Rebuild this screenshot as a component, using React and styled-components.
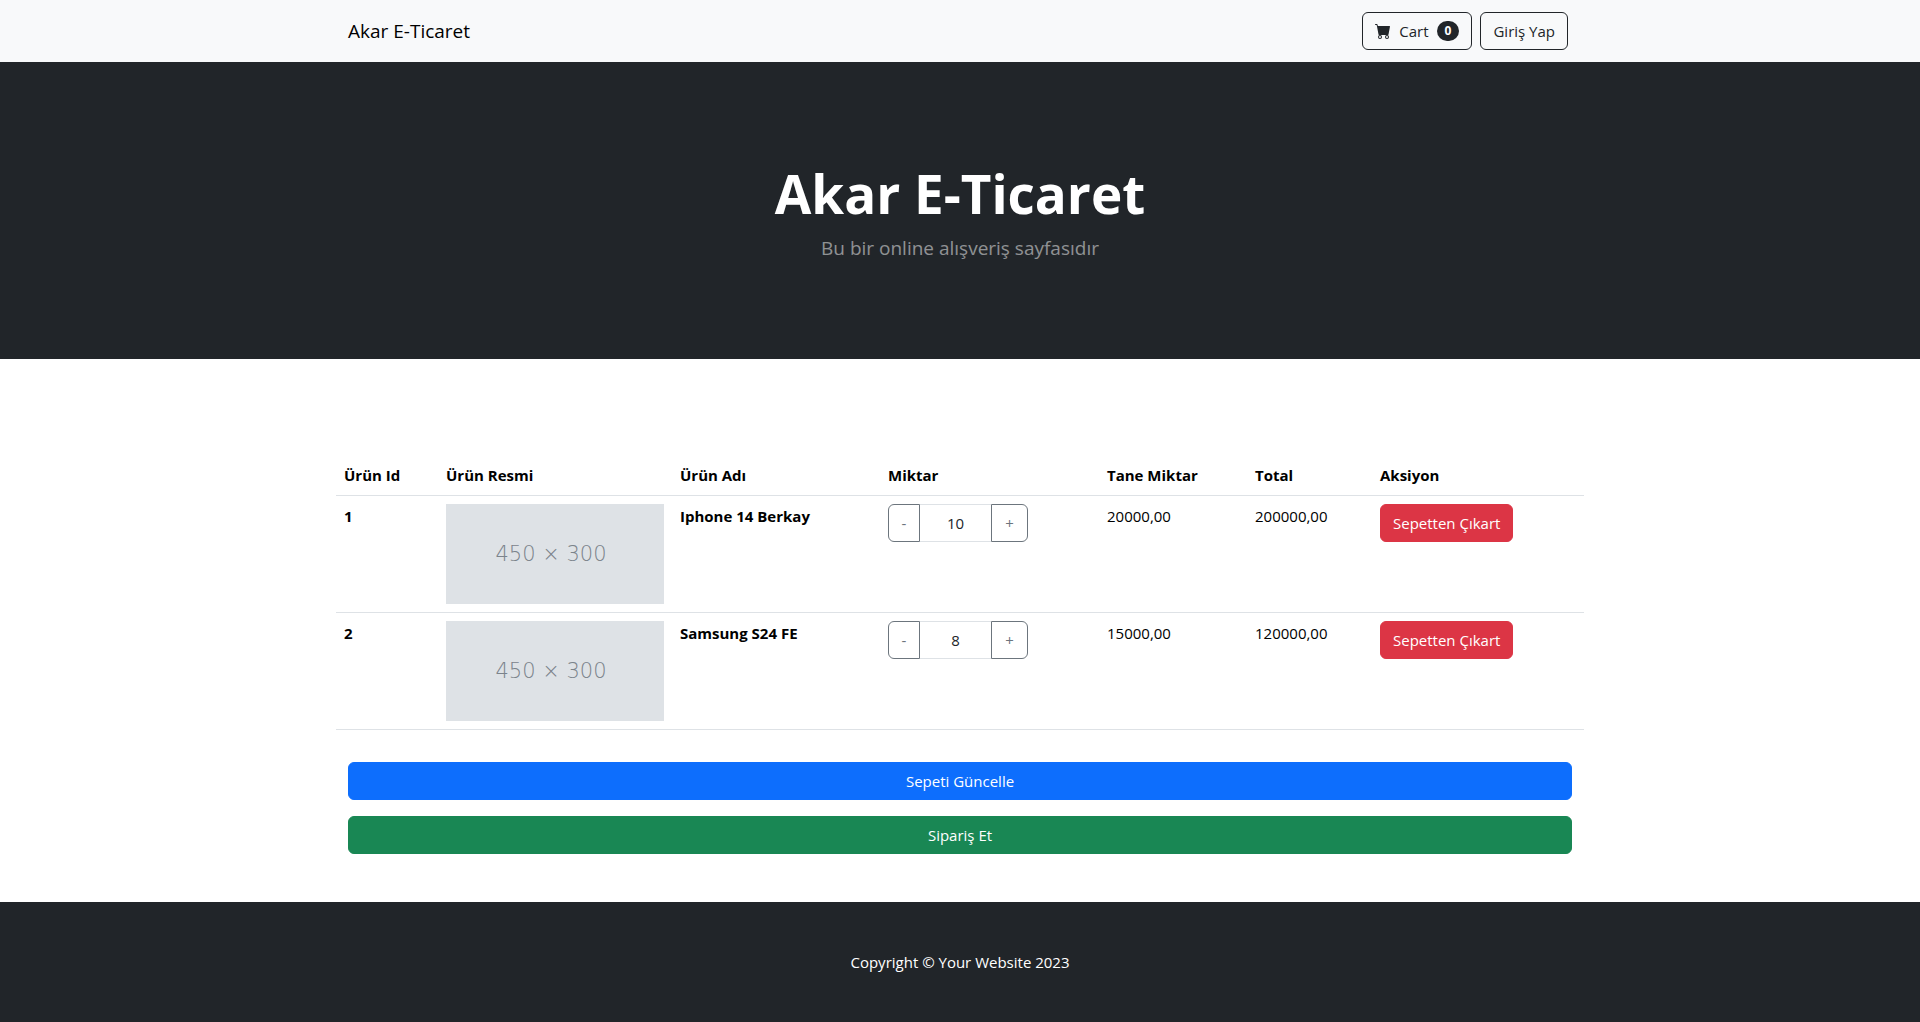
import React, { useState } from "react";
import styled, { createGlobalStyle } from "styled-components";
import { BsCartFill } from "react-icons/bs";

const GlobalStyle = createGlobalStyle`
  *, *::before, *::after { box-sizing: border-box; }
  body {
    margin: 0;
    background: #fff;
    color: #212529;
    font-family: "Segoe UI", "Open Sans", "Noto Sans", sans-serif;
    font-size: 15px;
    line-height: 24px;
  }
  button, input { font: inherit; }
`;

const Container = styled.div`
  max-width: 1320px;
  margin: 0 auto;
  padding: 0 48px;
`;

const Navbar = styled.nav`
  background: #f8f9fa;
  padding: 12px 0;
`;

const NavRow = styled(Container)`
  display: flex;
  align-items: center;
  justify-content: space-between;
  padding-right: 52px;
`;

const Brand = styled.a`
  color: #000;
  font-size: 19px;
  line-height: 30px;
  text-decoration: none;
`;

const NavActions = styled.div`
  display: flex;
  gap: 8px;
`;

const palettes = {
  dark: { bg: "transparent", border: "#212529", text: "#212529" },
  secondary: { bg: "transparent", border: "#6c757d", text: "#6c757d" },
  danger: { bg: "#dc3545", border: "#dc3545", text: "#fff" },
  primary: { bg: "#0d6efd", border: "#0d6efd", text: "#fff" },
  success: { bg: "#198754", border: "#198754", text: "#fff" },
};

const Button = styled.button`
  display: inline-flex;
  align-items: center;
  justify-content: center;
  gap: 8px;
  padding: 6px 12px;
  border: 1px solid ${(p) => palettes[p.$tone].border};
  border-radius: 6px;
  background: ${(p) => palettes[p.$tone].bg};
  color: ${(p) => palettes[p.$tone].text};
  cursor: pointer;
  white-space: nowrap;
`;

const Badge = styled.span`
  padding: 4px 8px;
  border-radius: 10px;
  background: #212529;
  color: #fff;
  font-size: 12px;
  font-weight: 700;
  line-height: 12px;
`;

const Hero = styled.header`
  padding: 96px 0;
  background: #212529;
  color: #fff;
  text-align: center;
`;

const HeroTitle = styled.h1`
  margin: 0 0 4px;
  font-size: 53px;
  font-weight: 700;
  line-height: 71px;
`;

const HeroText = styled.p`
  margin: 0;
  color: rgba(255, 255, 255, 0.5);
  font-size: 19px;
  line-height: 30px;
`;

const Main = styled.main`
  padding: 96px 0 48px;
`;

const CartBody = styled(Container)`
  display: flex;
  flex-direction: column;
  gap: 16px;
`;

const TableWrap = styled.div`
  margin: 0 -12px 16px;
`;

const Table = styled.table`
  width: 100%;
  table-layout: fixed;
  border-collapse: separate;
  border-spacing: 0;
  color: #000;
`;

const Col = styled.col`
  width: ${(p) => p.$width}px;
`;

const HeadCell = styled.th`
  padding: 8px;
  border-bottom: 1px solid #dee2e6;
  font-weight: 700;
  text-align: left;
  vertical-align: top;
`;

const Cell = styled.td`
  padding: 8px;
  border-bottom: 1px solid #dee2e6;
  font-weight: ${(p) => (p.$bold ? 700 : 400)};
  vertical-align: top;
`;

const Placeholder = styled.div`
  display: flex;
  align-items: center;
  justify-content: center;
  height: 100px;
  padding-right: 8px;
  background: #dee2e6;
  color: #7b838b;
  font-family: "DejaVu Sans", sans-serif;
  font-size: 21px;
  font-weight: 200;
`;

const Stepper = styled.div`
  display: flex;
  width: 140px;
`;

const StepButton = styled(Button)`
  border-radius: ${(p) => (p.$end ? "0 6px 6px 0" : "6px 0 0 6px")};
  width: ${(p) => (p.$end ? 37 : 32)}px;
`;

const Quantity = styled.input`
  flex: 1;
  min-width: 0;
  padding: 6px 12px;
  border: solid #dee2e6;
  border-width: 1px 0;
  background: #fff;
  color: #212529;
  text-align: center;
`;

const Footer = styled.footer`
  padding: 48px 0;
  background: #212529;
  color: #fff;
  text-align: center;
`;

const Copyright = styled.p`
  margin: 0;
`;

const columns = [
  { title: "Ürün Id", width: 102 },
  { title: "Ürün Resmi", width: 234 },
  { title: "Ürün Adı", width: 208 },
  { title: "Miktar", width: 219 },
  { title: "Tane Miktar", width: 148 },
  { title: "Total", width: 125 },
  { title: "Aksiyon", width: 212 },
];

const products = [
  { id: 1, name: "Iphone 14 Berkay", count: 10, price: "20000,00", total: "200000,00" },
  { id: 2, name: "Samsung S24 FE", count: 8, price: "15000,00", total: "120000,00" },
];

function QuantityStepper({ name, initial }) {
  const [count, setCount] = useState(initial);
  return (
    <Stepper>
      <StepButton type="button" $tone="secondary" aria-label={`${name} azalt`} onClick={() => setCount(Math.max(0, Number(count) - 1))}>
        -
      </StepButton>
      <Quantity type="text" aria-label={`${name} miktar`} value={count} onChange={(e) => setCount(e.target.value)} />
      <StepButton type="button" $tone="secondary" $end aria-label={`${name} artır`} onClick={() => setCount(Number(count) + 1)}>
        +
      </StepButton>
    </Stepper>
  );
}

export default function App() {
  return (
    <>
      <GlobalStyle />
      <Navbar>
        <NavRow>
          <Brand href="#">Akar E-Ticaret</Brand>
          <NavActions>
            <Button type="button" $tone="dark">
              <BsCartFill size={16} aria-hidden="true" />
              Cart
              <Badge>0</Badge>
            </Button>
            <Button type="button" $tone="dark">Giriş Yap</Button>
          </NavActions>
        </NavRow>
      </Navbar>

      <Hero>
        <HeroTitle>Akar E-Ticaret</HeroTitle>
        <HeroText>Bu bir online alışveriş sayfasıdır</HeroText>
      </Hero>

      <Main>
        <CartBody>
          <TableWrap>
            <Table>
              <colgroup>
                {columns.map((c) => <Col key={c.title} $width={c.width} />)}
              </colgroup>
              <thead>
                <tr>
                  {columns.map((c) => <HeadCell key={c.title} scope="col">{c.title}</HeadCell>)}
                </tr>
              </thead>
              <tbody>
                {products.map((p) => (
                  <tr key={p.id}>
                    <HeadCell scope="row">{p.id}</HeadCell>
                    <Cell><Placeholder>450 × 300</Placeholder></Cell>
                    <Cell $bold>{p.name}</Cell>
                    <Cell><QuantityStepper name={p.name} initial={p.count} /></Cell>
                    <Cell>{p.price}</Cell>
                    <Cell>{p.total}</Cell>
                    <Cell><Button type="button" $tone="danger">Sepetten Çıkart</Button></Cell>
                  </tr>
                ))}
              </tbody>
            </Table>
          </TableWrap>
          <Button type="button" $tone="primary">Sepeti Güncelle</Button>
          <Button type="button" $tone="success">Sipariş Et</Button>
        </CartBody>
      </Main>

      <Footer>
        <Copyright>Copyright © Your Website 2023</Copyright>
      </Footer>
    </>
  );
}
